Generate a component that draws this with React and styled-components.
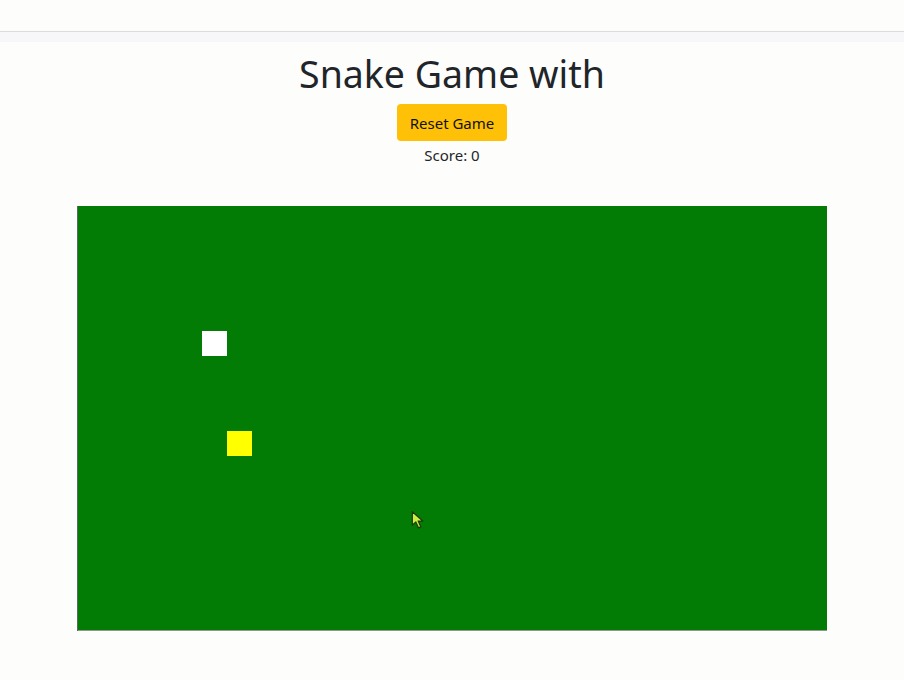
import React from 'react'
import styled, { createGlobalStyle } from 'styled-components'

const GlobalStyle = createGlobalStyle`
    html, body {
        margin: 0;
        padding: 0;
        background: #fdfdfc;
        font-family: "Noto Sans", "Open Sans", sans-serif;
        color: #212529;
    }`

const CELL = 25
const snake = [{ x: 5, y: 5 }]
const food = { x: 6, y: 9 }

export default function App() {
    return (
        <>
            <GlobalStyle />
            <TopBar />
            <Band />
            <Main>
                <Title>Snake Game with</Title>
                <ResetButton type="button">Reset Game</ResetButton>
                <Score>Score: 0</Score>
                <Board>
                    {snake.map((s, i) => (
                        <Cell key={i} $color="#ffffff" style={{ left: s.x * CELL, top: s.y * CELL }} />
                    ))}
                    <Cell $color="#ffff00" style={{ left: food.x * CELL, top: food.y * CELL }} />
                    <Cursor width="14" height="20" viewBox="0 0 16 22">
                        <path d="M1.5 1.5 L1.5 17 L5.5 13.2 L8.6 20 L11.2 18.8 L8.2 12.2 L13.5 12.2 Z"
                            fill="#c8f03c" stroke="#1f3a10" strokeWidth="1.4" strokeLinejoin="round" />
                    </Cursor>
                </Board>
            </Main>
        </>
    )
}
const TopBar = styled.div`
    height: 31px;
    border-bottom: 1px solid #dcdcdc;
    background: #fdfdfc;`
const Band = styled.div`
    height: 10px;
    background: #f7f7f9;`
const Main = styled.main`
    display: flex;
    flex-direction: column;
    align-items: center;
    padding-top: 9px;`
const Title = styled.h1`
    margin: 0;
    font-size: 37.5px;
    font-weight: 400;
    line-height: 46px;`
const ResetButton = styled.button`
    margin-top: 7px;
    width: 110px;
    height: 37px;
    background: #ffc107;
    border: none;
    border-radius: 4px;
    font-family: inherit;
    font-size: 15px;
    color: #111;`
const Score = styled.p`
    margin: 3px 0 0;
    font-size: 15px;
    line-height: 22px;`
const Board = styled.div`
    position: relative;
    margin-top: 40px;
    width: 750px;
    height: 425px;
    background: #027c05;
    box-shadow: inset 1px 0 0 #5a6a5a, inset 0 -1px 0 #8a9a8a;`
const Cell = styled.div`
    position: absolute;
    width: ${CELL}px;
    height: ${CELL}px;
    background: ${p => p.$color};`
const Cursor = styled.svg`
    position: absolute;
    left: 334px;
    top: 304px;`
